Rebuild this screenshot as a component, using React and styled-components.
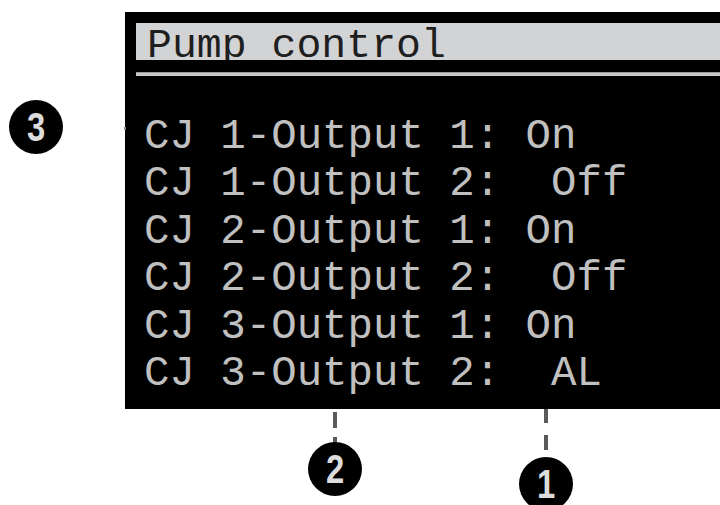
import React from "react";
import styled, { createGlobalStyle } from "styled-components";

const Global = createGlobalStyle`
  html, body { margin: 0; padding: 0; background: #ffffff; }
  body { width: 720px; height: 505px; overflow: hidden; }
`;

const mono = `"Courier New", "Nimbus Mono PS", "FreeMono", "Liberation Mono", monospace`;

const Page = styled.div`
  position: relative;
  width: 720px;
  height: 505px;
  background: #ffffff;
  overflow: hidden;
`;

const Screen = styled.div`
  margin: 12px 0 0 125px;
  width: 595px;
  height: 397px;
  background: #000000;
  display: flex;
  flex-direction: column;
  padding: 11px 0 0 11px;
  box-sizing: border-box;
  font-family: ${mono};
`;

const TitleBar = styled.div`
  height: 37px;
  background: #d2d3d5;
  overflow: hidden;
  padding-left: 11px;
  color: #1e1e1e;
  font-size: 41.5px;
  line-height: 45px;
  white-space: pre;
`;

const Divider = styled.div`
  margin-top: 12px;
  height: 4px;
  background: #c9c9c9;
  border-top: 1px solid #9a9a9a;
  box-sizing: border-box;
`;

const Rows = styled.div`
  margin-top: 38px;
  padding-left: 8px;
  display: flex;
  flex-direction: column;
`;

const Row = styled.div`
  color: #c0c0c0;
  font-size: 42.4px;
  line-height: 47.4px;
  white-space: pre;
`;

const Marker = styled.div`
  position: absolute;
  left: ${(p) => p.$x}px;
  top: ${(p) => p.$y}px;
  display: flex;
  flex-direction: column;
  align-items: center;
`;

const Dash = styled.div`
  width: 4px;
  height: ${(p) => p.$h}px;
  margin-bottom: ${(p) => p.$mb}px;
  background: #5a5a5a;
`;

const Circle = styled.div`
  width: 54px;
  height: 54px;
  border-radius: 50%;
  background: #000000;
  display: flex;
  align-items: center;
  justify-content: center;
  color: #dcdcdc;
  font-family: "Liberation Sans Narrow", "Liberation Sans", Arial, sans-serif;
  font-weight: 700;
  font-size: 40px;
  line-height: 1;
`;

const Digit = styled.span`
  display: inline-block;
  transform: scaleX(0.82);
`;

const Tick = styled.div`
  position: absolute;
  left: 124px;
  top: 127px;
  width: 2px;
  height: 3px;
  background: #8a8a8a;
`;

const rows = [
  "CJ 1-Output 1: On",
  "CJ 1-Output 2:  Off",
  "CJ 2-Output 1: On",
  "CJ 2-Output 2:  Off",
  "CJ 3-Output 1: On",
  "CJ 3-Output 2:  AL",
];

export default function App() {
  return (
    <Page>
      <Global />
      <Screen>
        <TitleBar>Pump control</TitleBar>
        <Divider />
        <Rows>
          {rows.map((r, i) => (
            <Row key={i}>{r}</Row>
          ))}
        </Rows>
      </Screen>
      <Tick />
      <Marker $x={9} $y={100}>
        <Circle><Digit>3</Digit></Circle>
      </Marker>
      <Marker $x={308} $y={412}>
        <Dash $h={16} $mb={9} />
        <Dash $h={5} $mb={0} />
        <Circle><Digit>2</Digit></Circle>
      </Marker>
      <Marker $x={519} $y={409}>
        <Dash $h={14} $mb={12} />
        <Dash $h={15} $mb={7} />
        <Circle><Digit>1</Digit></Circle>
      </Marker>
    </Page>
  );
}
